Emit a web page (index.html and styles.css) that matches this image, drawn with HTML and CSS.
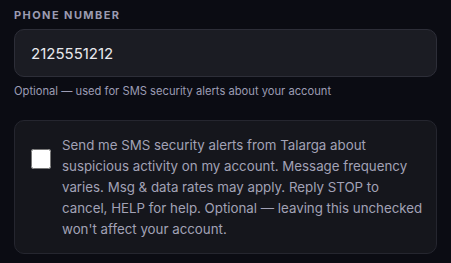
FILE: index.html
```html
<!DOCTYPE html>
<html lang="en">
<head>
    <meta charset="UTF-8">
    <meta name="viewport" content="width=device-width, initial-scale=1.0">
    <title>Phone number</title>
    <link rel="stylesheet" href="styles.css">
</head>
<body>
    <div class="field">
        <label class="label" for="phone">Phone number</label>
        <input class="input" id="phone" type="tel" value="2125551212">
        <p class="hint">Optional — used for SMS security alerts about your account</p>
    </div>

    <label class="consent">
        <input class="check" type="checkbox">
        <span class="consent-text">Send me SMS security alerts from Talarga about suspicious activity on my account. Message frequency varies. Msg &amp; data rates may apply. Reply STOP to cancel, HELP for help. Optional — leaving this unchecked won't affect your account.</span>
    </label>
</body>
</html>
```
FILE: styles.css
```css
* {
    box-sizing: border-box;
}
body {
    margin: 0;
    padding: 8px 14px;
    background: #0b0c13;
    font-family: 'Inter', 'Liberation Sans', sans-serif;
}
.field {
    display: flex;
    flex-direction: column;
}
.label {
    font-size: 11px;
    font-weight: 700;
    line-height: 14px;
    letter-spacing: 0.13em;
    text-transform: uppercase;
    color: #9b9bb1;
    margin-bottom: 7px;
}
.input {
    width: 100%;
    height: 48px;
    padding: 0 16px;
    font-family: inherit;
    font-size: 15px;
    color: #e9e9ee;
    background: #1b1c23;
    border: 1px solid #2d2e38;
    border-radius: 10px;
    outline: none;
}
.hint {
    margin: 7px 0 0;
    font-size: 11.2px;
    line-height: 14px;
    color: #9c9cb4;
}
.consent {
    display: flex;
    align-items: flex-start;
    gap: 11px;
    margin-top: 22px;
    padding: 14px 12px 13px 16px;
    background: #15161c;
    border: 1px solid #25262f;
    border-radius: 10px;
}
.check {
    flex: none;
    width: 20px;
    height: 20px;
    margin: 14px 0 0;
}
.consent-text {
    font-size: 13.3px;
    line-height: 21px;
    color: #a2a2b6;
}
```
